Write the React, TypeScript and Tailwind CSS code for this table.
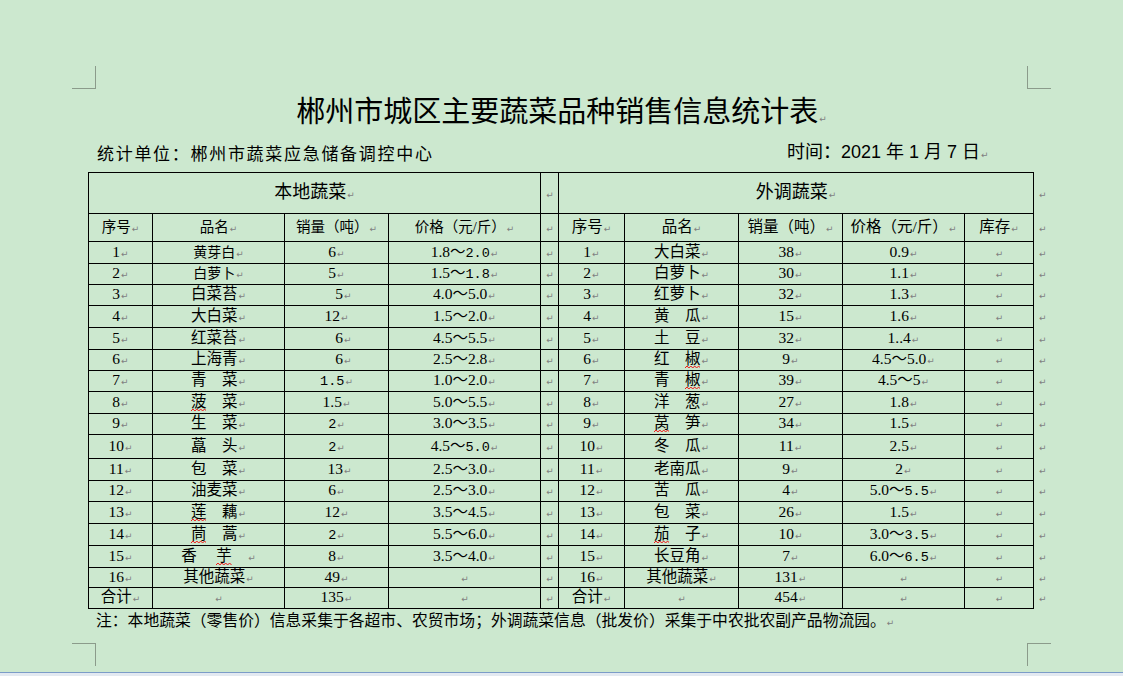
import type { ReactNode } from "react";

// Word-style paragraph mark
function Mark() {
  return <span className="ml-px font-['DejaVu_Sans',sans-serif] text-[9px] text-[#7f7f7f]">↵</span>;
}

// red spell-check squiggle under a character
function W({ children }: { children: ReactNode }) {
  return (
    <span className="relative">
      {children}
      <svg
        className="absolute bottom-[-2px] left-0 h-[4px] w-full"
        viewBox="0 0 16 4"
        preserveAspectRatio="none"
      >
        <polyline
          points="0,3 2,1 4,3 6,1 8,3 10,1 12,3 14,1 16,3"
          fill="none"
          stroke="#f01818"
          strokeWidth="1"
          vectorEffect="non-scaling-stroke"
        />
      </svg>
    </span>
  );
}

// digits typed in the Song font (wider period)
function S({ children }: { children: ReactNode }) {
  return <span className="font-['Liberation_Mono',monospace] text-[13.5px]">{children}</span>;
}

type Row = { h: string; left: ReactNode[]; right: ReactNode[] };

const ROWS: Row[] = [
  { h: "h-[22px]", left: ["1", <span className="text-[14px]">黄芽白</span>, "6", <>1.8～<S>2.0</S></>], right: ["1", "大白菜", "38", "0.9"] },
  { h: "h-[21px]", left: ["2", <span className="text-[14px]">白萝卜</span>, "5", <>1.5～<S>1.8</S></>], right: ["2", "白萝卜", "30", "1.1"] },
  { h: "h-[21px]", left: ["3", "白菜苔", <span className="pl-[14px]">5</span>, "4.0～5.0"], right: ["3", "红萝卜", "32", "1.3"] },
  { h: "h-[22px]", left: ["4", "大白菜", "12", "1.5～2.0"], right: ["4", "黄　瓜", "15", "1.6"] },
  { h: "h-[22px]", left: ["5", "红菜苔", <span className="pl-[14px]">6</span>, "4.5～5.5"], right: ["5", "土　豆", "32", "1..4"] },
  { h: "h-[21px]", left: ["6", "上海青", <span className="pl-[14px]">6</span>, "2.5～2.8"], right: ["6", <>红　<W>椒</W></>, "9", "4.5～5.0"] },
  { h: "h-[21px]", left: ["7", "青　菜", <S>1.5</S>, "1.0～2.0"], right: ["7", <>青　<W>椒</W></>, "39", "4.5～5"] },
  { h: "h-[22px]", left: ["8", <><W>菠</W>　菜</>, "1.5", "5.0～5.5"], right: ["8", "洋　葱", "27", "1.8"] },
  { h: "h-[21px]", left: ["9", "生　菜", <S>2</S>, "3.0～3.5"], right: ["9", <><W>莴</W>　笋</>, "34", "1.5"] },
  { h: "h-[24px]", left: ["10", "藠　头", <S>2</S>, <>4.5～<S>5.0</S></>], right: ["10", "冬　瓜", "11", "2.5"] },
  { h: "h-[22px]", left: ["11", "包　菜", <span className="pl-[6px]">13</span>, "2.5～3.0"], right: ["11", "老南瓜", "9", "2"] },
  { h: "h-[21px]", left: ["12", "油麦菜", "6", "2.5～3.0"], right: ["12", "苦　瓜", "4", <>5.0～<S>5.5</S></>] },
  { h: "h-[22px]", left: ["13", <><W>莲</W>　藕</>, "12", "3.5～4.5"], right: ["13", "包　菜", "26", "1.5"] },
  { h: "h-[22px]", left: ["14", <><W>茼</W>　蒿</>, <S>2</S>, "5.5～6.0"], right: ["14", <><W>茄</W>　子</>, "10", <>3.0～<S>3.5</S></>] },
  { h: "h-[22px]", left: ["15", <>香　 <W>芋</W>　</>, "8", "3.5～4.0"], right: ["15", "长豆角", "7", <>6.0～<S>6.5</S></>] },
  { h: "h-[20px]", left: ["16", "其他蔬菜", "49", ""], right: ["16", "其他蔬菜", "131", ""] },
  { h: "h-[21px]", left: ["合计", "", "135", ""], right: ["合计", "", "454", ""] },
];

const CELL = "border border-black p-0 text-center align-middle whitespace-nowrap";

function Cell({ children, span }: { children?: ReactNode; span?: number }) {
  return (
    <td colSpan={span} className={CELL}>
      {children}
      <Mark />
    </td>
  );
}

function EndMark() {
  return (
    <td className="border-0 p-0 pl-[4px] text-left align-middle">
      <Mark />
    </td>
  );
}

function Corner({ pos }: { pos: "tl" | "tr" | "bl" | "br" }) {
  const box = {
    tl: "left-[72px] top-[66px] border-r border-b",
    tr: "left-[1027px] top-[66px] border-l border-b",
    bl: "left-[72px] top-[643px] border-r border-t",
    br: "left-[1027px] top-[643px] border-l border-t",
  }[pos];
  return <div className={`absolute h-[23px] w-[24px] border-[#8b9b8b] ${box}`} />;
}

export default function App() {
  return (
    <div className="relative flex h-[676px] w-[1123px] flex-col overflow-hidden bg-[#cce8cf] text-black">
      <Corner pos="tl" />
      <Corner pos="tr" />
      <Corner pos="bl" />
      <Corner pos="br" />

      <div className="flex-1 pt-[94px] font-['Noto_Sans_CJK_SC',sans-serif]">
        <h1 className="px-[95px] text-center text-[29px] leading-[30px] font-normal">
          郴州市城区主要蔬菜品种销售信息统计表
          <Mark />
        </h1>

        <div className="mt-[7px] flex h-[24px] items-center pl-[97px] text-[17px] leading-[24px]">
          <span className="w-[690px] tracking-[1.7px]">统计单位：郴州市蔬菜应急储备调控中心</span>
          <span className="font-['Liberation_Sans','Noto_Sans_CJK_SC',sans-serif] text-[18px]">
            时间：2021 年 1 月 7 日
            <Mark />
          </span>
        </div>

        <table className="ml-[88px] mt-[7px] table-fixed border-collapse font-['Liberation_Serif','Noto_Sans_CJK_SC',serif] text-[15.5px] leading-[16px]">
          <colgroup>
            <col className="w-[64px]" />
            <col className="w-[132px]" />
            <col className="w-[104px]" />
            <col className="w-[152px]" />
            <col className="w-[18px]" />
            <col className="w-[66px]" />
            <col className="w-[114px]" />
            <col className="w-[104px]" />
            <col className="w-[122px]" />
            <col className="w-[69px]" />
            <col className="w-[20px]" />
          </colgroup>
          <tbody>
            <tr className="h-[41px] text-[18px]">
              <Cell span={4}>本地蔬菜</Cell>
              <Cell />
              <Cell span={5}>外调蔬菜</Cell>
              <EndMark />
            </tr>
            <tr className="h-[28px]">
              <td className={`${CELL} text-[14.5px]`}>序号<Mark /></td>
              <td className={`${CELL} text-[14.5px]`}>品名<Mark /></td>
              <td className={`${CELL} text-[14.5px]`}>销量（吨）<Mark /></td>
              <td className={`${CELL} text-[14.5px]`}>价格（元/斤）<Mark /></td>
              <Cell />
              <Cell>序号</Cell>
              <Cell>品名</Cell>
              <Cell>销量（吨）</Cell>
              <Cell>价格（元/斤）</Cell>
              <Cell>库存</Cell>
              <EndMark />
            </tr>
            {ROWS.map((row, i) => (
              <tr key={i} className={row.h}>
                {row.left.map((c, j) => (
                  <Cell key={`l${j}`}>{c}</Cell>
                ))}
                <Cell />
                {row.right.map((c, j) => (
                  <Cell key={`r${j}`}>{c}</Cell>
                ))}
                <Cell />
                <EndMark />
              </tr>
            ))}
          </tbody>
        </table>

        <p className="mt-[1px] pl-[96px] text-[15.8px] leading-[20px]">
          注：本地蔬菜（零售价）信息采集于各超市、农贸市场；外调蔬菜信息（批发价）采集于中农批农副产品物流园。
          <Mark />
        </p>
      </div>

      <div className="h-px bg-[#7c9cc8]" />
      <div className="h-[3px] bg-[#e3e9f1]" />
    </div>
  );
}
